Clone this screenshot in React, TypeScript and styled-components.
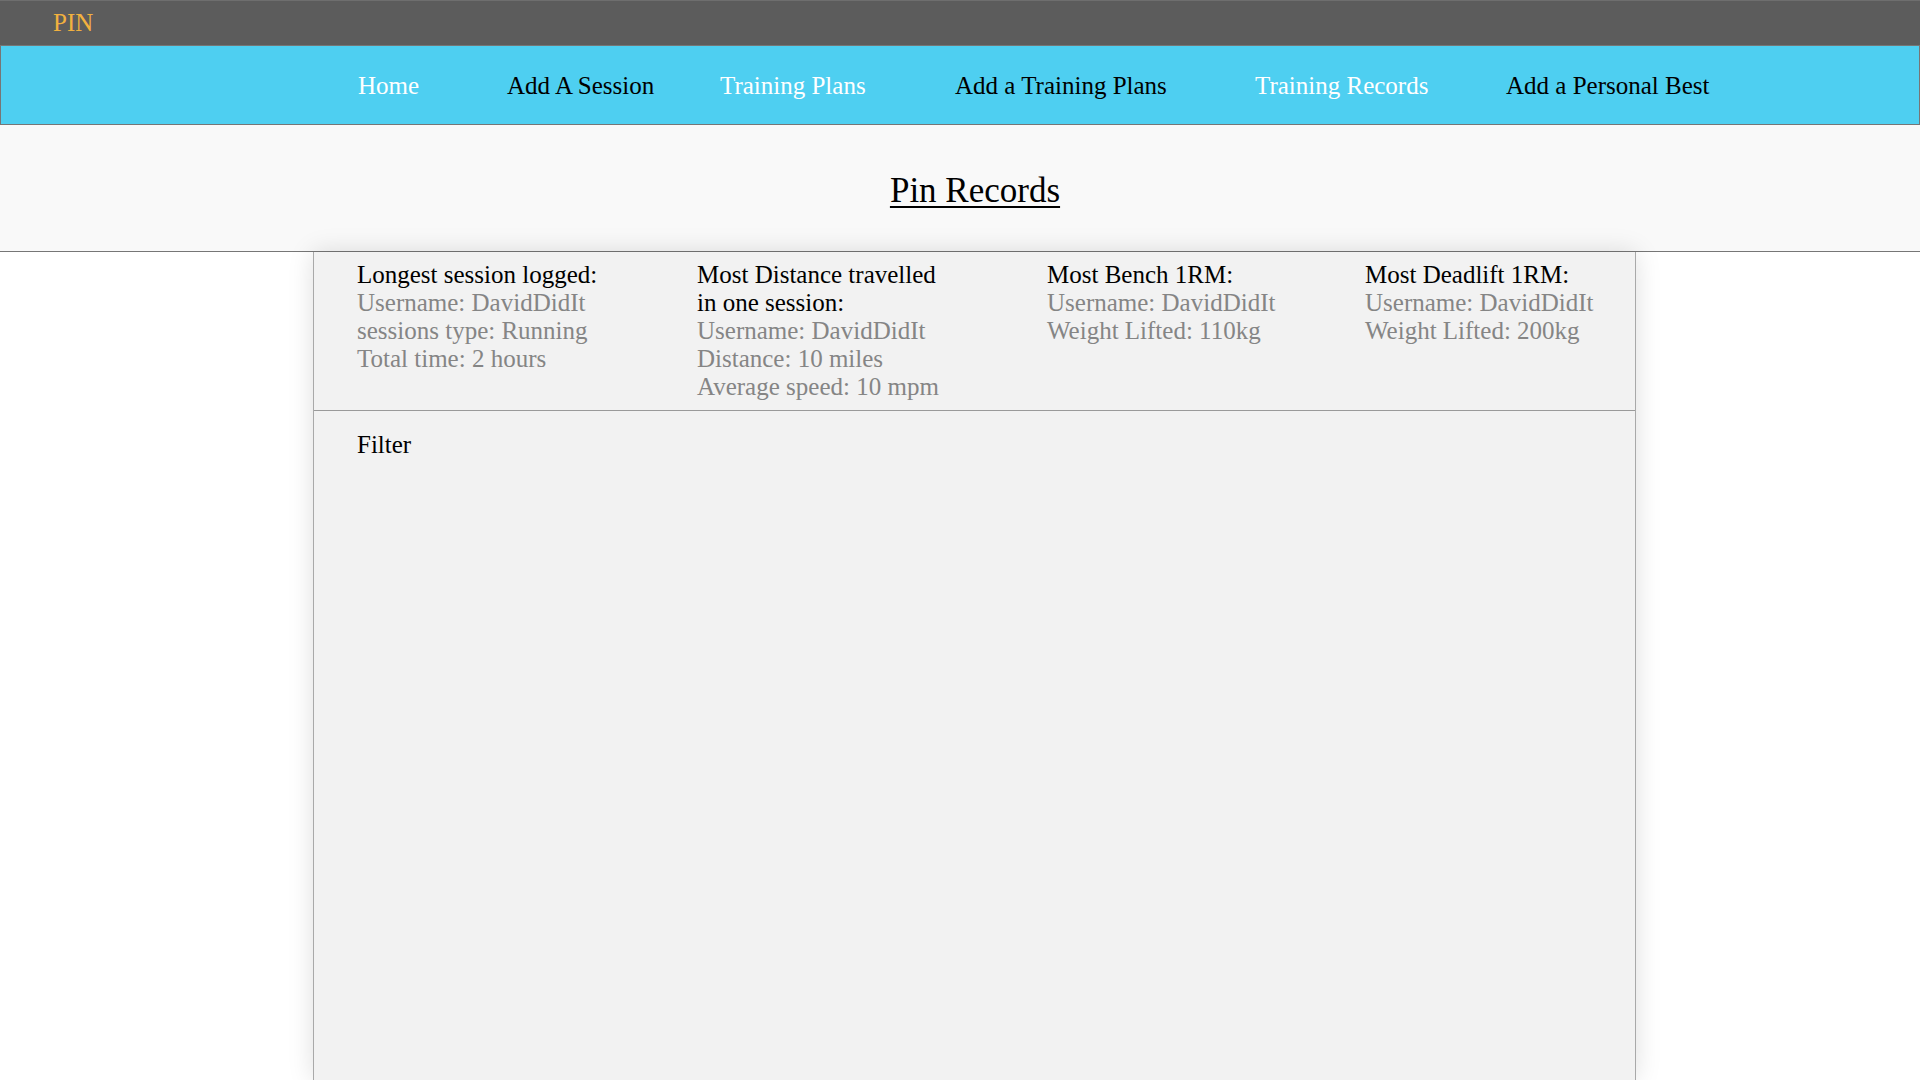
import React from 'react'
import styled, { createGlobalStyle } from 'styled-components'

interface Record {
  title: string
  lines: string[]
  narrow?: boolean
}

const navLinks = [
  { label: 'Home', light: true, width: 149 },
  { label: 'Add A Session', light: false, width: 213 },
  { label: 'Training Plans', light: true, width: 235 },
  { label: 'Add a Training Plans', light: false, width: 300 },
  { label: 'Training Records', light: true, width: 251 },
  { label: 'Add a Personal Best', light: false, width: 0 },
]

const records: Record[] = [
  {
    title: 'Longest session logged:',
    lines: ['Username: DavidDidIt', 'sessions type: Running', 'Total time: 2 hours'],
  },
  {
    title: 'Most Distance travelled in one session:',
    lines: ['Username: DavidDidIt', 'Distance: 10 miles', 'Average speed: 10 mpm'],
    narrow: true,
  },
  {
    title: 'Most Bench 1RM:',
    lines: ['Username: DavidDidIt', 'Weight Lifted: 110kg'],
  },
  {
    title: 'Most Deadlift 1RM:',
    lines: ['Username: DavidDidIt', 'Weight Lifted: 200kg'],
  },
]

const App: React.FC = () => {
  return (
    <>
      <GlobalStyle />
      <Page>
        <TopBar>
          <Brand>PIN</Brand>
        </TopBar>
        <NavBar>
          {navLinks.map((link) => (
            <NavItem key={link.label} $light={link.light} $width={link.width}>
              {link.label}
            </NavItem>
          ))}
        </NavBar>
        <Header>
          <Title>Pin Records</Title>
        </Header>
        <Panel>
          <StatsRow>
            {records.map((record) => (
              <StatColumn key={record.title} $narrow={record.narrow}>
                <StatTitle>{record.title}</StatTitle>
                {record.lines.map((line) => (
                  <StatLine key={line}>{line}</StatLine>
                ))}
              </StatColumn>
            ))}
          </StatsRow>
          <FilterSection>
            <FilterLabel>Filter</FilterLabel>
          </FilterSection>
        </Panel>
      </Page>
    </>
  )
}

const GlobalStyle = createGlobalStyle`
  html, body {
    margin: 0;
    padding: 0;
    background: #ffffff;
    font-family: "Liberation Serif", "Times New Roman", serif;
  }
  * {
    box-sizing: border-box;
  }
`

const Page = styled.div`
  display: flex;
  flex-direction: column;
  min-height: 100vh;
  overflow: hidden;
`

const TopBar = styled.div`
  height: 45px;
  background: #5c5c5c;
  border-top: 1px solid #6e6e6e;
  display: flex;
  align-items: center;
  padding-left: 53px;
`

const Brand = styled.span`
  color: #f2b13f;
  font-size: 25px;
  line-height: 1;
  margin-top: -2px;
`

const NavBar = styled.nav`
  height: 80px;
  background: #4ecff1;
  border: 1px solid #767676;
  display: flex;
  align-items: center;
  padding: 2px 0 0 357px;
`

const NavItem = styled.a<{ $light: boolean; $width: number }>`
  flex: 0 0 ${(p) => (p.$width ? `${p.$width}px` : 'auto')};
  font-size: 25px;
  color: ${(p) => (p.$light ? '#ffffff' : '#000000')};
  cursor: pointer;
  white-space: nowrap;
`

const Header = styled.header`
  height: 127px;
  background: #f9f9f9;
  border-bottom: 1px solid #767676;
  display: flex;
  align-items: center;
  justify-content: center;
  padding: 6px 0 0 30px;
`

const Title = styled.h1`
  margin: 0;
  font-size: 35px;
  font-weight: normal;
  text-decoration: underline;
  text-decoration-thickness: 2px;
  text-underline-offset: 4px;
  color: #000;
`

const Panel = styled.main`
  flex: 1;
  width: 1323px;
  margin-left: 313px;
  background: #f2f2f2;
  border-left: 1px solid #a9a9a9;
  border-right: 1px solid #a9a9a9;
  box-shadow: 0 0 24px rgba(0, 0, 0, 0.13);
`

const StatsRow = styled.section`
  display: grid;
  grid-template-columns: 340px 350px 318px 1fr;
  padding: 9px 0 9px 43px;
  border-bottom: 1px solid #9a9a9a;
`

const StatColumn = styled.div<{ $narrow?: boolean }>`
  display: flex;
  flex-direction: column;
  max-width: ${(p) => (p.$narrow ? '252px' : 'none')};
  font-size: 25px;
`

const StatTitle = styled.span`
  color: #000;
`

const StatLine = styled.span`
  color: #858585;
`

const FilterSection = styled.section`
  padding: 20px 0 0 43px;
`

const FilterLabel = styled.span`
  font-size: 25px;
  color: #000;
`

export default App
